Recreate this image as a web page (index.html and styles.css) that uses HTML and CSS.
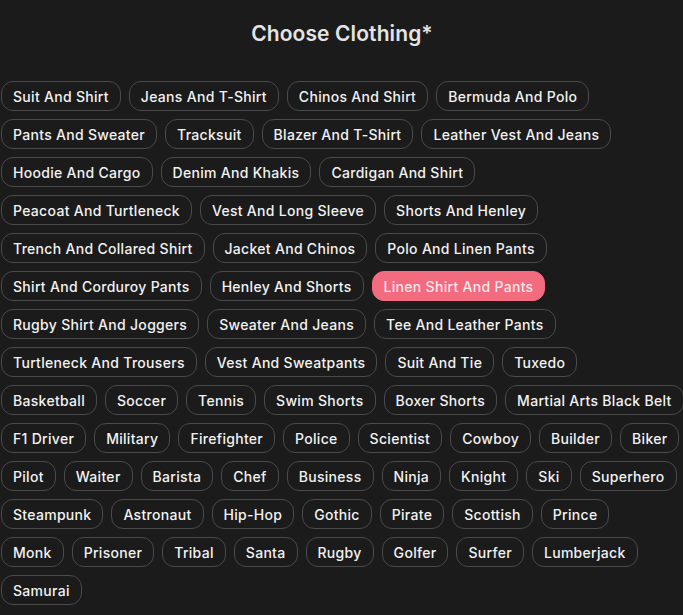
FILE: index.html
```html
<!DOCTYPE html>
<html lang="en">
<head>
    <meta charset="UTF-8">
    <meta name="viewport" content="width=device-width, initial-scale=1.0">
    <title>Choose Clothing</title>
    <link rel="stylesheet" href="styles.css">
</head>
<body>
    <div class="container">
        <h2 class="title">Choose Clothing*</h2>

        <!-- clothing options, one array per row -->
        <div class="chips" id="clothingList"></div>
    </div>

    <script>
        const rows = [
            ["Suit And Shirt", "Jeans And T-Shirt", "Chinos And Shirt", "Bermuda And Polo"],
            ["Pants And Sweater", "Tracksuit", "Blazer And T-Shirt", "Leather Vest And Jeans"],
            ["Hoodie And Cargo", "Denim And Khakis", "Cardigan And Shirt"],
            ["Peacoat And Turtleneck", "Vest And Long Sleeve", "Shorts And Henley"],
            ["Trench And Collared Shirt", "Jacket And Chinos", "Polo And Linen Pants"],
            ["Shirt And Corduroy Pants", "Henley And Shorts", "Linen Shirt And Pants"],
            ["Rugby Shirt And Joggers", "Sweater And Jeans", "Tee And Leather Pants"],
            ["Turtleneck And Trousers", "Vest And Sweatpants", "Suit And Tie", "Tuxedo"],
            ["Basketball", "Soccer", "Tennis", "Swim Shorts", "Boxer Shorts", "Martial Arts Black Belt"],
            ["F1 Driver", "Military", "Firefighter", "Police", "Scientist", "Cowboy", "Builder", "Biker"],
            ["Pilot", "Waiter", "Barista", "Chef", "Business", "Ninja", "Knight", "Ski", "Superhero"],
            ["Steampunk", "Astronaut", "Hip-Hop", "Gothic", "Pirate", "Scottish", "Prince"],
            ["Monk", "Prisoner", "Tribal", "Santa", "Rugby", "Golfer", "Surfer", "Lumberjack"],
            ["Samurai"]
        ];

        let selected = "Linen Shirt And Pants";
        const list = document.getElementById("clothingList");

        function displayOptions() {
            list.innerHTML = "";
            rows.forEach(items => {
                const row = document.createElement("div");
                row.className = "chip-row";
                items.forEach(name => {
                    const chip = document.createElement("button");
                    chip.className = name === selected ? "chip active" : "chip";
                    chip.textContent = name;
                    chip.addEventListener("click", () => {
                        selected = name;
                        displayOptions();
                    });
                    row.appendChild(chip);
                });
                list.appendChild(row);
            });
        }

        displayOptions();
    </script>
</body>
</html>
```

FILE: styles.css
```css
* {
  margin: 0;
  padding: 0;
  box-sizing: border-box;
  font-family: Inter, "Noto Sans", sans-serif;
}

body {
  background-color: #1b1b1b;
}

.container {
  padding: 21px 0 0 1px;
}

.title {
  text-align: center;
  color: #e4e4e4;
  font-size: 21px;
  font-weight: 600;
  line-height: 26px;
  letter-spacing: 0.1px;
  margin-bottom: 34px;
}

.chips {
  display: flex;
  flex-direction: column;
  gap: 8px;
}

.chip-row {
  display: flex;
  gap: 8px;
}

.chip {
  height: 30px;
  padding: 0 11px;
  background-color: #1b1b1b;
  color: #f2f2f2;
  border: 1px solid #4a4a4a;
  border-radius: 12px;
  font-size: 14px;
  font-weight: 500;
  letter-spacing: 0.3px;
  white-space: nowrap;
  cursor: pointer;
}

.chip.active {
  background-color: #f26b7f;
  border-color: #f26b7f;
  color: #fde8ec;
}
```
